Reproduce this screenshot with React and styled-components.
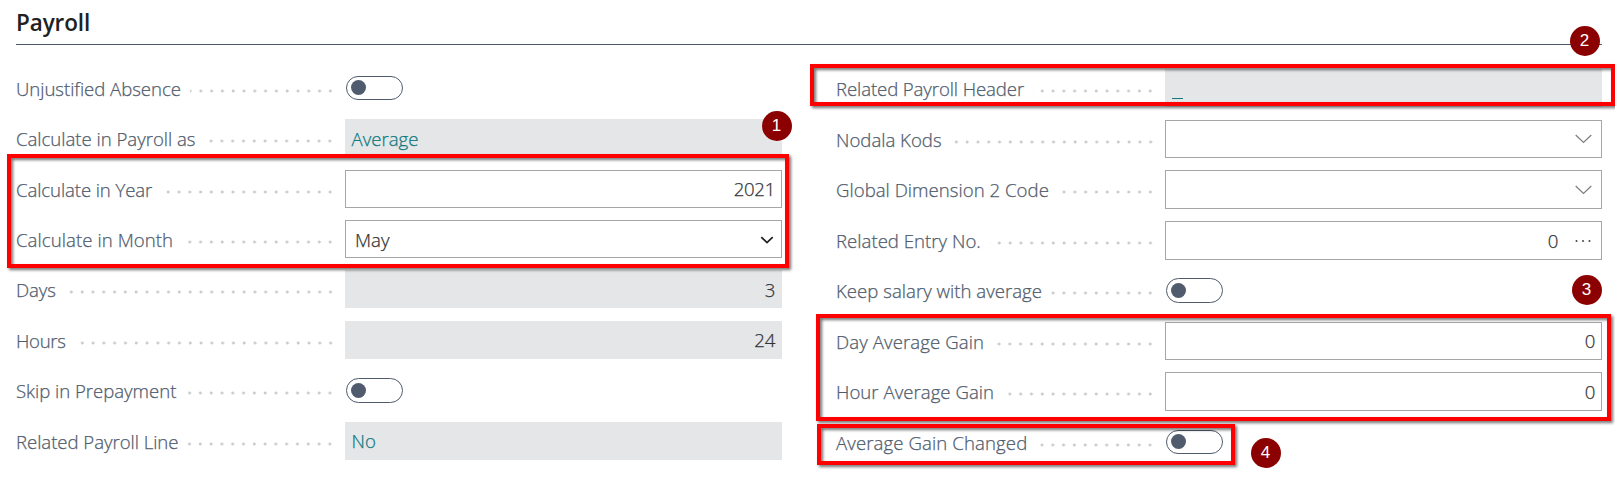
import React from "react";
import styled, { createGlobalStyle } from "styled-components";

const GlobalStyle = createGlobalStyle`
  body {
    margin: 0;
    background: #fff;
    font-family: "Open Sans", "Noto Sans", sans-serif;
    color: #333;
    overflow: hidden;
  }
  * { box-sizing: border-box; }
`;

const Page = styled.main`
  position: relative;
  width: 1615px;
  height: 477px;
  padding: 0 13px 0 16px;
`;

const Title = styled.h2`
  margin: 0;
  height: 45px;
  padding-top: 7px;
  border-bottom: 1px solid #4a5a6c;
  font-size: 22.5px;
  line-height: 32px;
  font-weight: 600;
  letter-spacing: -0.1px;
  color: #212121;
`;

const Columns = styled.div`
  display: grid;
  grid-template-columns: 766px 766px;
  column-gap: 54px;
`;

const Column = styled.div`
  display: grid;
  grid-auto-rows: ${(p) => p.$pitch}px;
  padding-top: ${(p) => p.$top}px;
`;

const Row = styled.div`
  display: grid;
  grid-template-columns: 329px 437px;
  align-items: start;
`;

const Caption = styled.div`
  display: flex;
  height: 38px;
  padding-right: 12px;
  line-height: 39.4px;
`;

const Label = styled.span`
  font-size: 18.6px;
  font-weight: 300;
  -webkit-text-stroke: 0.25px #505c6d;
  letter-spacing: ${(p) => p.$track}px;
  white-space: nowrap;
  color: #505c6d;
`;

const Leader = styled.span`
  flex: 1;
  height: 4px;
  margin: 20px 0 0 9px;
  background: radial-gradient(circle at 8px 2px, #cbcbcb 1.2px, transparent 1.8px) right top / 10.8px 4px;
`;

const Field = styled.div`
  display: flex;
  align-items: center;
  justify-content: ${(p) => (p.$start ? "flex-start" : "flex-end")};
  height: ${(p) => p.$height || 38}px;
  padding: 1px ${(p) => p.$end || 6}px 0 ${(p) => p.$start || 6}px;
  border: 1px solid ${(p) => (p.$filled ? "#e5e6e8" : "#a6a6a9")};
  background: ${(p) => (p.$filled ? "#e5e6e8" : "#fff")};
  color: ${(p) => (p.$link ? "#0f7a7f" : "#333")};
  font-size: 18.6px;
  font-weight: 300;
  -webkit-text-stroke: 0.25px currentColor;
  line-height: 36px;
  letter-spacing: ${(p) => (p.$start ? 0 : -0.3)}px;
`;

const Blank = styled.span`
  width: 11px;
  height: 1px;
  margin-top: 19px;
  background: #0f7a7f;
`;

const Spacer = styled.span`
  flex: ${(p) => (p.$width ? `0 0 ${p.$width}px` : 1)};
`;

const Switch = styled.div`
  display: flex;
  align-items: center;
  width: 57px;
  height: 24.3px;
  margin: 7px 0 0 1px;
  padding-left: 4px;
  border: 1px solid #505c6d;
  border-radius: 13px;
  &::before {
    content: "";
    width: 15px;
    height: 15px;
    border-radius: 50%;
    background: #505c6d;
  }
`;

const Frame = styled.div`
  position: absolute;
  left: ${(p) => p.$x}px;
  top: ${(p) => p.$y}px;
  width: ${(p) => p.$w}px;
  height: ${(p) => p.$h}px;
  border: 4px solid #f00;
  filter: drop-shadow(2px 2px 1.5px rgba(0, 0, 0, 0.55));
`;

const Badge = styled.div`
  position: absolute;
  left: ${(p) => p.$x}px;
  top: ${(p) => p.$y}px;
  width: 30px;
  height: 30px;
  border-radius: 50%;
  background: #8b0000;
  color: #fff;
  font: 17px/29px "Liberation Sans", sans-serif;
  text-align: center;
`;

const LookupChevron = () => (
  <svg width="17" height="10" viewBox="0 0 17 10" fill="none" stroke="#7d7d80" strokeWidth="1.2">
    <path d="M.7 1l7.8 7.5L16.3 1" />
  </svg>
);

const SelectChevron = () => (
  <svg width="14" height="8" viewBox="0 0 14 8" fill="none" stroke="#222" strokeWidth="1.8">
    <path d="M1.3 1.2L7 6.6l5.7-5.4" />
  </svg>
);

const Ellipsis = () => (
  <svg width="16" height="4" viewBox="0 0 16 4" fill="#444">
    <circle cx="1.5" cy="2" r="1" />
    <circle cx="8" cy="2" r="1" />
    <circle cx="14.5" cy="2" r="1" />
  </svg>
);

const Entry = ({ label, track = -0.1, children }) => (
  <Row>
    <Caption>
      <Label $track={track}>{label}</Label>
      <Leader />
    </Caption>
    {children}
  </Row>
);

const frames = [
  [7, 154, 782, 114],
  [810, 64, 805, 42],
  [816, 314, 795, 107],
  [817, 424, 418, 41],
];

const badges = [
  [761.5, 110.5],
  [1569.5, 25.5],
  [1571.5, 274.5],
  [1250.5, 437.5],
];

export default function App() {
  return (
    <Page>
      <GlobalStyle />
      <Title>Payroll</Title>
      <Columns>
        <Column $top={23.7} $pitch={50.45}>
          <Entry label="Unjustified Absence" track={-0.04}><Switch /></Entry>
          <Entry label="Calculate in Payroll as" track={-0.02}><Field $filled $link $start={5.5}>Average</Field></Entry>
          <Entry label="Calculate in Year"><Field>2021</Field></Entry>
          <Entry label="Calculate in Month" track={0.07}>
            <Field $start={9} $end={7}>May<Spacer /><SelectChevron /></Field>
          </Entry>
          <Entry label="Days"><Field $filled>3</Field></Entry>
          <Entry label="Hours" track={-0.3}><Field $filled>24</Field></Entry>
          <Entry label="Skip in Prepayment" track={-0.03}><Switch /></Entry>
          <Entry label="Related Payroll Line" track={-0.04}><Field $filled $link $start={5.5}>No</Field></Entry>
        </Column>
        <Column $top={24.3} $pitch={50.5}>
          <Entry label="Related Payroll Header"><Field $filled $link $start={5.5}><Blank /></Field></Entry>
          <Entry label="Nodala Kods" track={0}><Field $end={9.5}><LookupChevron /></Field></Entry>
          <Entry label="Global Dimension 2 Code" track={0.03}><Field $height={38.3} $end={9.5}><LookupChevron /></Field></Entry>
          <Entry label="Related Entry No." track={0.02}>
            <Field $height={38.8} $end={10}>0<Spacer $width={17} /><Ellipsis /></Field>
          </Entry>
          <Entry label="Keep salary with average" track={0.02}><Switch /></Entry>
          <Entry label="Day Average Gain" track={0.1}><Field>0</Field></Entry>
          <Entry label="Hour Average Gain" track={0.03}><Field $height={38.3}>0</Field></Entry>
          <Entry label="Average Gain Changed" track={0.1}><Switch /></Entry>
        </Column>
      </Columns>
      {frames.map(([x, y, w, h]) => <Frame key={y} $x={x} $y={y} $w={w} $h={h} />)}
      {badges.map(([x, y], i) => <Badge key={y} $x={x} $y={y}>{i + 1}</Badge>)}
    </Page>
  );
}
